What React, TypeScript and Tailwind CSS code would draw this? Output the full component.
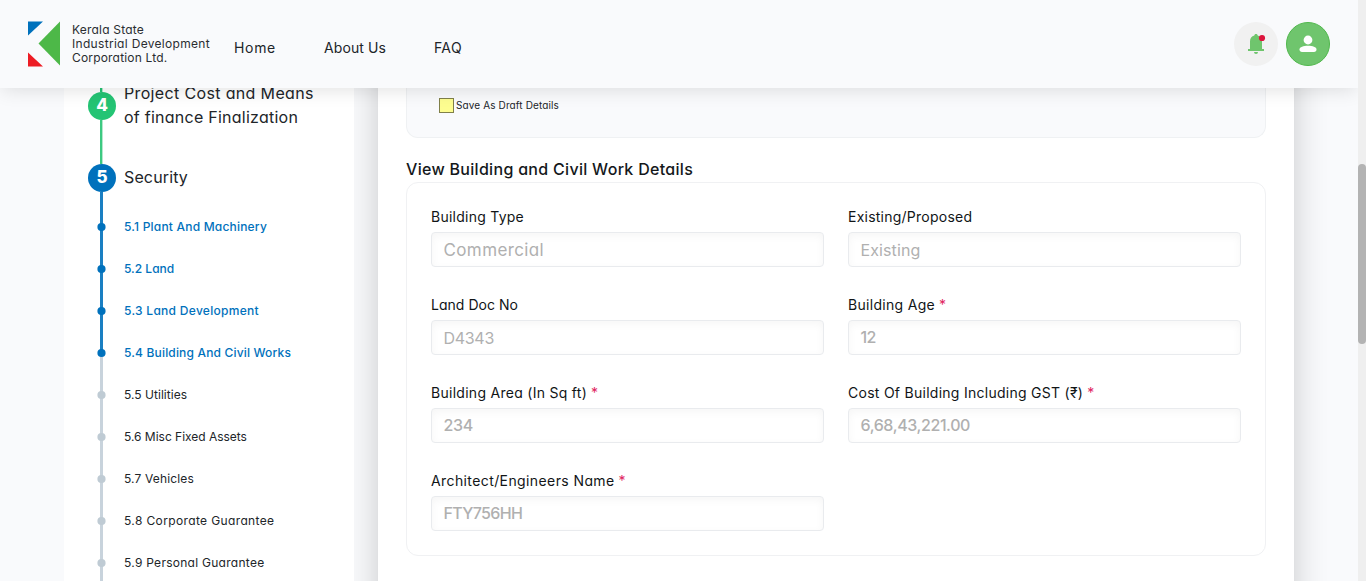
import type { ReactNode } from "react";

type SubStep = { label: string; state: "done" | "current" | "todo"; tracking: string };

const subSteps: SubStep[] = [
  { label: "5.1 Plant And Machinery", state: "done", tracking: "tracking-[0.2px]" },
  { label: "5.2 Land", state: "done", tracking: "tracking-[0px]" },
  { label: "5.3 Land Development", state: "done", tracking: "tracking-[0.29px]" },
  { label: "5.4 Building And Civil Works", state: "current", tracking: "tracking-[0.17px]" },
  { label: "5.5 Utilities", state: "todo", tracking: "tracking-[0.03px]" },
  { label: "5.6 Misc Fixed Assets", state: "todo", tracking: "tracking-[-0.02px]" },
  { label: "5.7 Vehicles", state: "todo", tracking: "tracking-[0.15px]" },
  { label: "5.8 Corporate Guarantee", state: "todo", tracking: "tracking-[0.37px]" },
  { label: "5.9 Personal Guarantee", state: "todo", tracking: "tracking-[0.27px]" },
];

type FieldData = {
  label: string;
  labelTracking: string;
  value: string;
  valueClass: string;
  required?: boolean;
};

const fields: FieldData[] = [
  { label: "Building Type", labelTracking: "tracking-[0.25px]", value: "Commercial", valueClass: "pt-0.5 text-[17px] font-normal tracking-[0.38px]" },
  { label: "Existing/Proposed", labelTracking: "tracking-[0.24px]", value: "Existing", valueClass: "text-base font-normal tracking-[0.1px]" },
  { label: "Land Doc No", labelTracking: "tracking-[0.03px]", value: "D4343", valueClass: "text-base font-normal tracking-[-0.3px]" },
  { label: "Building Age", labelTracking: "tracking-[0.3px]", value: "12", valueClass: "text-base pb-0.5 font-medium tracking-[-0.6px]", required: true },
  { label: "Building Area (In Sq ft)", labelTracking: "tracking-[0.28px]", value: "234", valueClass: "text-base pb-0.5 font-medium tracking-[-0.3px]", required: true },
  { label: "Cost Of Building Including GST (₹)", labelTracking: "tracking-[0.27px]", value: "6,68,43,221.00", valueClass: "text-base pb-0.5 font-medium tracking-[-0.4px]", required: true },
  { label: "Architect/Engineers Name", labelTracking: "tracking-[0.4px]", value: "FTY756HH", valueClass: "text-base pb-0.5 font-medium tracking-[-0.67px]", required: true },
];

function Logo() {
  return (
    <div className="flex shrink-0 items-center gap-3">
      <svg width="32" height="46" viewBox="0 0 32 46" className="shrink-0">
        <path d="M0 0.5H15L0 14.5Z" fill="#0071bc" />
        <path d="M0 31.5L15 45.5H0Z" fill="#ed1c24" />
        <path d="M32 0.5V44.5L10.5 22.5Z" fill="#4db848" />
      </svg>
      <p className="text-xs leading-[14px] text-[#2a2d31]">
        <span className="block tracking-[0.2px]">Kerala State</span>
        <span className="block tracking-[0.31px]">Industrial Development</span>
        <span className="block tracking-[0.18px]">Corporation Ltd.</span>
      </p>
    </div>
  );
}

function Header() {
  return (
    <header className="relative z-10 flex h-[88px] shrink-0 items-center bg-[#f9fafc] px-7 shadow-[0_4px_18px_-2px_rgba(0,0,0,0.12)]">
      <Logo />
      <nav className="mt-2 ml-6 flex gap-12 text-sm whitespace-nowrap text-[#212529]">
        <a className="w-[42px] tracking-[0.69px]">Home</a>
        <a className="w-[62px] tracking-[0.1px]">About Us</a>
        <a className="tracking-[0.37px]">FAQ</a>
      </nav>
      <div className="ml-auto flex gap-2">
        <button className="flex size-11 items-center justify-center rounded-full bg-[#f1f1f1]">
          <svg width="20" height="24" viewBox="0 0 20 24">
            <path d="M10 2c1 0 1.700.7 1.700 1.600C14.400 4.400 16 6.500 16 9.400V17h2v2H2v-2h2V9.400c0-2.900 1.600-5 4.300-5.800C8.300 2.700 9 2 10 2Z" fill="#6fc56d" />
            <path d="M8 20h4a2 2 0 0 1-4 0Z" fill="#6fc56d" />
            <circle cx="16" cy="6" r="3.100" fill="#dc143c" />
          </svg>
        </button>
        <button className="flex size-11 items-center justify-center rounded-full border border-[#50b84c] bg-[#6fc56d]">
          <svg width="18" height="18" viewBox="0 0 18 18">
            <circle cx="9" cy="5" r="4.400" fill="#fff" />
            <path d="M0.500 14.500C0.500 12 4.500 10.800 9 10.800s8.500 1.200 8.500 3.700c0 1.500-1 2.500-2.500 2.500H3C1.500 17 0.500 16 0.500 14.500Z" fill="#fff" />
          </svg>
        </button>
      </div>
    </header>
  );
}

function StepBadge({ color, children }: { color: string; children: ReactNode }) {
  return (
    <span className={`flex size-7 shrink-0 items-center justify-center rounded-full text-[17px] font-extrabold text-white ${color}`}>
      {children}
    </span>
  );
}

function Sidebar() {
  return (
    <aside className="relative z-[1] w-[290px] shrink-0 bg-white pl-6 text-[#212529]">
      <div className="h-1 pl-3">
        <div className="h-1 w-[3px] border-r border-[#b4e8cc] bg-[#24c474]" />
      </div>
      <div className="flex h-[72px] gap-2">
        <div className="flex w-7 flex-col">
          <StepBadge color="bg-[#24c474]">4</StepBadge>
          <div className="ml-3 w-[3px] flex-1 border-r border-[#b4e8cc] bg-[#3cc981]" />
        </div>
        <p className="-mt-[11px] text-base leading-6">
          <span className="block tracking-[0.35px]">Project Cost and Means</span>
          <span className="block tracking-[0.25px]">of finance Finalization</span>
        </p>
      </div>
      <div className="flex h-[42px] gap-2">
        <div className="flex w-7 flex-col">
          <StepBadge color="bg-[#0071bc]">5</StepBadge>
          <div className="ml-3 w-[3px] flex-1 bg-[#1a7fc2]" />
        </div>
        <p className="text-base leading-[26px] tracking-[0.14px]">Security</p>
      </div>
      {subSteps.map((s) => (
        <div key={s.label} className="flex h-[42px] items-center gap-2 text-xs">
          <div className="h-full w-7 pl-3">
            <div className="relative flex h-full w-[3px] flex-col">
              <div className={`flex-1 ${s.state === "todo" ? "bg-[#c8d3dc]" : "bg-[#1a7fc2]"}`} />
              <div className={`flex-1 ${s.state === "done" ? "bg-[#1a7fc2]" : "bg-[#c8d3dc]"}`} />
              <svg className="absolute top-[16px] -left-[4px]" width="11" height="10" viewBox="0 0 11 10">
                <circle cx="5.5" cy="5" r="4.100" fill={s.state === "todo" ? "#bfcbd4" : "#0071bc"} />
              </svg>
            </div>
          </div>
          <span className={`${s.tracking} ${s.state === "todo" ? "" : "font-medium text-[#0071bc]"}`}>{s.label}</span>
        </div>
      ))}
    </aside>
  );
}

function Field({ field }: { field: FieldData }) {
  return (
    <div className="flex flex-col">
      <label className="h-[25px] text-sm leading-[19px] text-[#111517]">
        <span className={field.labelTracking}>{field.label}</span>
        {field.required && <span className="ml-1 text-[#e0245e]">*</span>}
      </label>
      <div className={`flex h-[35px] items-center rounded border border-[#e9ebee] bg-white px-[11.500px] text-[#b0b0b0] shadow-[inset_0_3px_8px_rgba(0,0,0,0.04)] ${field.valueClass}`}>
        {field.value}
      </div>
    </div>
  );
}

function Main() {
  return (
    <main className="-mt-10 ml-6 h-[600px] w-[916px] shrink-0 bg-white px-7 pt-10 shadow-[0_0_32px_rgba(0,0,0,0.2)]">
      <section className="flex h-[50px] items-start gap-0.5 rounded-b-xl border border-t-0 border-[#eff1f3] bg-[#f9fafc] pt-2.5 pl-8">
        <span className="size-[15px] border border-[#80804a] bg-[#fdfd90]" />
        <span className="text-[10px] leading-[15px] tracking-[0.12px] text-[#212529]">Save As Draft Details</span>
      </section>
      <h2 className="mt-5 h-6 text-base leading-[22px] font-medium tracking-[0.3px] text-[#14181b]">View Building and Civil Work Details</h2>
      <section className="grid grid-cols-2 gap-x-6 gap-y-7 rounded-xl border border-[#f0f1f3] p-6">
        {fields.map((f) => (
          <Field key={f.label} field={f} />
        ))}
      </section>
    </main>
  );
}

export default function App() {
  return (
    <div className="flex h-[581px] w-[1366px] overflow-hidden bg-[#f9fafc] font-['Inter','Noto_Sans',sans-serif] [font-feature-settings:'cv11']">
      <div className="flex w-[1358px] flex-col overflow-hidden">
        <Header />
        <div className="flex min-h-0 flex-1 pl-16">
          <Sidebar />
          <Main />
        </div>
      </div>
      <div className="w-2 bg-[#efefef] pt-[164px]">
        <div className="h-[180px] rounded-full bg-[#b3b3b3]" />
      </div>
    </div>
  );
}
